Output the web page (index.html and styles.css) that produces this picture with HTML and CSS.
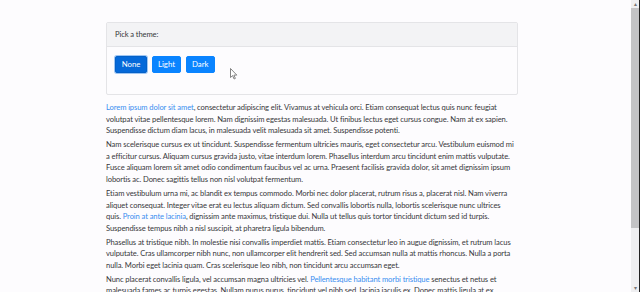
FILE: index.html
```html
<!doctype html>
<html>
<head>
  <title>Theme picker</title>
  <meta charset="utf-8"/>
  <link rel="stylesheet" href="styles.css">
</head>
<body>
  <div class="container">
    <div class="card">
      <div class="card__header">Pick a theme:</div>
      <div class="card__body">
        <button class="btn btn--active">None</button>
        <button class="btn">Light</button>
        <button class="btn">Dark</button>
        <svg class="cursor" width="8" height="12" viewBox="0 0 8 12">
          <path d="M0.5 0.5 L0.5 9.5 L2.6 7.6 L4.1 11 L5.4 10.4 L3.9 7.1 L6.8 7.1 Z" fill="#fff" stroke="#666" stroke-width="0.8"/>
        </svg>
      </div>
    </div>

    <p><a href="#">Lorem ipsum dolor sit amet</a>, consectetur adipiscing elit. Vivamus at vehicula orci. Etiam consequat lectus quis nunc feugiat volutpat vitae pellentesque lorem. Nam dignissim egestas malesuada. Ut finibus lectus eget cursus congue. Nam at ex sapien. Suspendisse dictum diam lacus, in malesuada velit malesuada sit amet. Suspendisse potenti.</p>
    <p>Nam scelerisque cursus ex ut tincidunt. Suspendisse fermentum ultricies mauris, eget consectetur arcu. Vestibulum euismod mi a efficitur cursus. Aliquam cursus gravida justo, vitae interdum lorem. Phasellus interdum arcu tincidunt enim mattis vulputate. Fusce aliquam lorem sit amet odio condimentum faucibus vel ac urna. Praesent facilisis gravida dolor, sit amet dignissim ipsum lobortis ac. Donec sagittis tellus non nisl volutpat fermentum.</p>
    <p>Etiam vestibulum urna mi, ac blandit ex tempus commodo. Morbi nec dolor placerat, rutrum risus a, placerat nisl. Nam viverra aliquet consequat. Integer vitae erat eu lectus aliquam dictum. Sed convallis lobortis nulla, lobortis scelerisque nunc ultrices quis. <a href="#">Proin at ante lacinia</a>, dignissim ante maximus, tristique dui. Nulla ut tellus quis tortor tincidunt dictum sed id turpis. Suspendisse tempus nibh a nisl suscipit, at pharetra ligula bibendum.</p>
    <p>Phasellus at tristique nibh. In molestie nisi convallis imperdiet mattis. Etiam consectetur leo in augue dignissim, et rutrum lacus vulputate. Cras ullamcorper nibh nunc, non ullamcorper elit hendrerit sed. Sed accumsan nulla at mattis rhoncus. Nulla a porta nulla. Morbi eget lacinia quam. Cras scelerisque leo nibh, non tincidunt arcu accumsan eget.</p>
    <p>Nunc placerat convallis ligula, vel accumsan magna ultricies vel. <a href="#">Pellentesque habitant morbi tristique</a> senectus et netus et malesuada fames ac turpis egestas. Nullam purus purus, tincidunt vel nibh sed, lacinia iaculis ex. Donec mattis ligula at ex sodales, a fermentum nisi tempor. Aenean quis lorem vitae est elementum dictum.</p>
  </div>

  <div class="scrollbar">
    <div class="scrollbar__arrow">&#9652;</div>
    <div class="scrollbar__thumb"></div>
    <div class="scrollbar__track"></div>
    <div class="scrollbar__arrow">&#9662;</div>
  </div>
</body>
</html>
```

FILE: styles.css
```css
html, body {
  height: 100%;
  overflow: hidden;
}

body {
  background-color: #fdfcfe;
  color: #38383b;
  font-family: Lato, sans-serif;
  font-size: 7.6px;
  letter-spacing: -0.1px;
  line-height: 11.6px;
  margin: 0;
}

.container {
  margin: 22px 0 0 106px;
  width: 412px;
}

.card {
  background-color: #fdfcfe;
  border: 1px solid #e4e4e7;
  border-radius: 2px;
  margin-bottom: 7px;
}
.card__header {
  background-color: #f3f3f5;
  border-bottom: 1px solid #e4e4e7;
  height: 23px;
  line-height: 23px;
  padding-left: 8px;
}
.card__body {
  display: flex;
  gap: 5px;
  padding: 9px 8px 21px;
  position: relative;
}

.btn {
  background-color: #0a84ff;
  border: 1px solid #0a84ff;
  border-radius: 2px;
  color: #fff;
  font-family: inherit;
  font-size: 7.8px;
  height: 17px;
  line-height: 15px;
  padding: 0 5px;
}
.btn--active {
  background-color: #0569d9;
  border-color: #0561c8;
  box-shadow: 0 0 0 1px #9fc6f3;
  width: 32px;
}

.cursor {
  left: 123px;
  position: absolute;
  top: 21px;
}

p {
  margin: 0 0 2.4px;
  max-width: 409px;
}
a {
  color: #3a8ef0;
  text-decoration: none;
}

.scrollbar {
  background-color: #efeff1;
  border-right: 1px solid #222;
  bottom: 0;
  display: flex;
  flex-direction: column;
  position: fixed;
  right: 0;
  top: 0;
  width: 8px;
}
.scrollbar__arrow {
  color: #777;
  font-size: 6px;
  height: 8px;
  line-height: 8px;
  text-align: center;
}
.scrollbar__thumb {
  background-color: #c3c3c5;
  height: 220px;
}
.scrollbar__track {
  flex: 1;
}
```
